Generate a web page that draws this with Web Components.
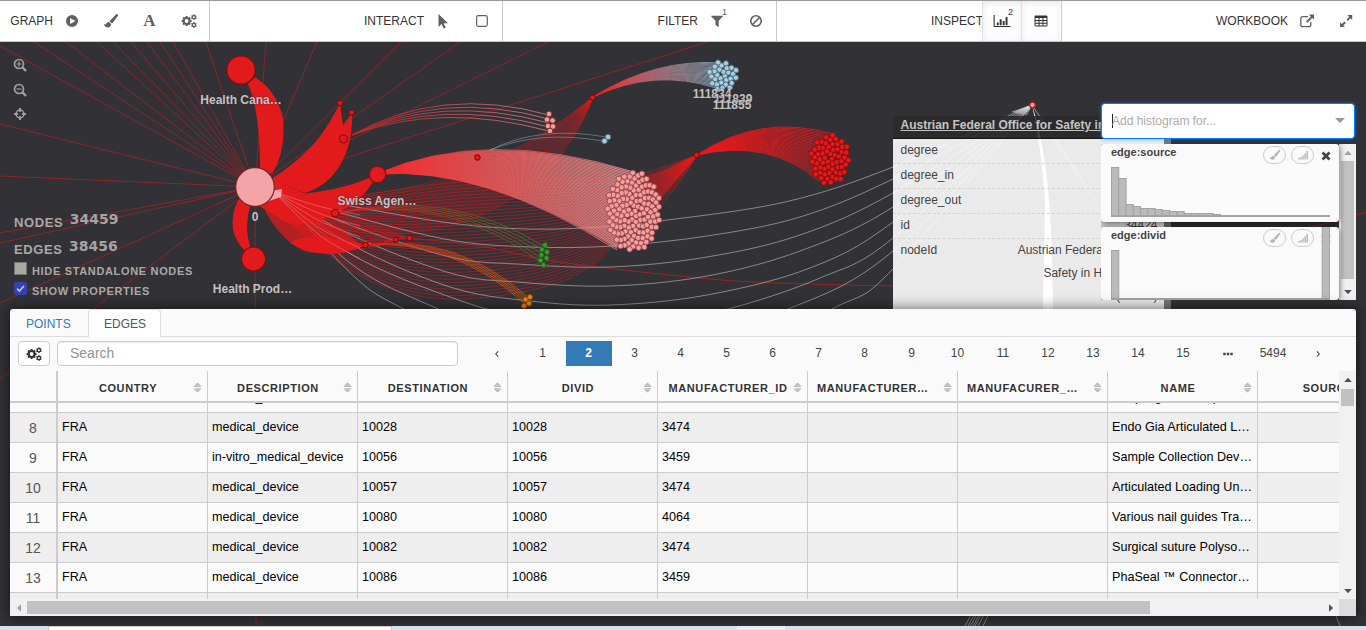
<!DOCTYPE html>
<html lang="en">
<head>
<meta charset="utf-8">
<title>Graph explorer</title>
<style>
html,body{margin:0;height:100%;overflow:hidden}
body{font:12px/1.4 "Liberation Sans",Arial,sans-serif;color:#333;background:#323136}
</style>
</head>
<body>
<graph-app></graph-app>
<script>
const define = (name, html, setup) => customElements.define(name, class extends HTMLElement {
  constructor(){ super(); this.attachShadow({mode:'open'}); }
  connectedCallback(){
    if (this.ready) return;
    this.ready = true;
    this.shadowRoot.innerHTML = typeof html === 'function' ? html(this) : html;
    if (setup) setup(this.shadowRoot, this);
  }
});

/* ---------- icons ---------- */
const gear = (cx, cy, r, hole, n, tooth) => {
  let t = '';
  for (let i = 0; i < n; i++) t += `<rect x="${cx - tooth/2}" y="${cy - r}" width="${tooth}" height="${r*.5}" transform="rotate(${i*360/n} ${cx} ${cy})"/>`;
  const mid = (r*.8 + hole)/2;
  return t + `<circle cx="${cx}" cy="${cy}" r="${mid}" fill="none" stroke="currentColor" stroke-width="${r*.8 - hole}"/>`;
};
const ICONS = {
  play: '<path fill-rule="evenodd" d="M8 2a6 6 0 1 0 0 12A6 6 0 0 0 8 2zM6.1 4.9v6.2L11.4 8z"/>',
  brush: '<path d="M14.7 1.2c.6.5.5 1.1.1 1.8L10.200 9.200c-.5.700-1 1-1.500 1.100L6.700 8.500c0-.6.3-1 .8-1.500l5.500-5.500c.6-.6 1.200-.7 1.700-.3zM6 9l2.200 2c0 2-1.400 3.400-3.700 3.400C2.300 14.400 1.200 12.900 1.100 10.800c.6.400 1.100.8 1.600.7.5-.1.4-.8.9-1.500C4.200 9.200 5 8.900 6 9z"/>',
  cogs: gear(5.6, 8, 5, 1.9, 8, 2) + gear(12.9, 4.2, 2.9, 1, 6, 1.300) + gear(12.9, 12, 2.9, 1, 6, 1.300),
  pointer: '<path d="M3.500 1v13l3.100-2.900 2 4.500 2.100-.9-2-4.400h4.300z"/>',
  square: '<rect x="2.600" y="2.600" width="10.700" height="10.700" rx="1.800" fill="none" stroke="currentColor" stroke-width="1.200"/>',
  filter: '<path d="M2.400 2.800h11.300c.3.300.2.600 0 .8L9.700 7.700v6c-.2.300-.5.300-.8.100L6.500 11.700V7.700L2.300 3.600c-.2-.3-.1-.6.100-.8z"/>',
  ban: '<circle cx="8" cy="8" r="5.200" fill="none" stroke="currentColor" stroke-width="1.600"/><path d="M4.500 11.500l7-7" stroke="currentColor" stroke-width="1.600"/>',
  chart: '<path d="M.7 2v10.900H16.500v1.100H-.4V2z M2.800 9.500h1.900v2.800H2.800zM5.700 6.300h1.900v6H5.700zM8.700 8h1.900v4.300H8.700zM11.600 4h1.900v8.300h-1.900z"/>',
  table: '<path fill-rule="evenodd" d="M2.800 2.500h10.400q1.300 0 1.300 1.300v8.400q0 1.300-1.300 1.300H2.800q-1.300 0-1.300-1.300V3.800q0-1.300 1.300-1.300zM2.500 5v1.900h3V5zm4 0v1.900h3V5zm4 0v1.900h3V5zm-8 2.900v1.800h3V7.900zm4 0v1.800h3V7.900zm4 0v1.800h3V7.900zm-8 2.800v1.800h3v-1.800zm4 0v1.800h3v-1.800zm4 0v1.800h3v-1.800z"/>',
  external: '<path d="M9 3.700H3.800q-2 0-2 2v6q0 2 2 2h6q2 0 2-2V9" fill="none" stroke="currentColor" stroke-width="1.300"/><path d="M9.800 1.500h5.200v5.200l-1.800-1.800-4.900 4.900-1.400-1.400 4.900-4.900z"/>',
  expand: '<path d="M9.300 2.100h4.900V7l-1.700-1.700-2.600 2.600-1.300-1.300 2.600-2.600zM6.600 8.600l1.300 1.300-2.600 2.600 1.700 1.600H2V9.200l1.700 1.700z"/>',
  zoomin: '<circle cx="7" cy="7" r="4.500" fill="none" stroke="currentColor" stroke-width="1.700"/><path d="M10.200 10.200l3.800 3.800" stroke="currentColor" stroke-width="2.400"/><path d="M4.600 7h4.800M7 4.600v4.800" stroke="currentColor" stroke-width="1.200"/>',
  zoomout: '<circle cx="7" cy="7" r="4.500" fill="none" stroke="currentColor" stroke-width="1.700"/><path d="M10.200 10.200l3.800 3.800" stroke="currentColor" stroke-width="2.400"/><path d="M4.600 7h4.800" stroke="currentColor" stroke-width="1.200"/>',
  crosshair: '<circle cx="8" cy="8" r="3.900" fill="none" stroke="currentColor" stroke-width="1.500"/><path d="M8 2v4M8 10v4M2 8h4M10 8h4" stroke="currentColor" stroke-width="1.900"/>',
  signal: '<path d="M1.500 12h1.900v2H1.500zM4.300 10.700h1.900V14H4.300zM7.100 8.500H9V14H7.100zM9.900 5.800h1.900V14H9.900zM12.700 2.500h1.900V14h-1.900z"/>',
  close: '<path d="M3.300 3.300l9.400 9.400M12.700 3.300l-9.400 9.400" stroke="currentColor" stroke-width="3.600"/>',
  sort: '<path d="M8-1l6.500 6h-13zM1.500 5.500h13V7h-13zM1.500 9.200h13v1.500h-13zM8 17l-6.500-5.800h13z"/>',
  left: '<path d="M9.300 5L6.600 8l2.700 3" fill="none" stroke="currentColor" stroke-width="1.200"/>',
  right: '<path d="M6.800 5l2.700 3-2.700 3" fill="none" stroke="currentColor" stroke-width="1.200"/>',
  dots: '<path d="M2.600 6.700h2.800v2.600H2.600zM6.600 6.700h2.800v2.600H6.600zM10.600 6.700h2.800v2.600h-2.800z"/>',
  check: '<path d="M3 8.200l3.400 3.500L13 4.300" fill="none" stroke="currentColor" stroke-width="2.300"/>'
};
define('ui-icon', el => `
<style>:host{display:inline-flex;width:var(--size,16px);height:var(--size,16px);flex:none}svg{width:100%;height:100%;overflow:visible;fill:currentColor}</style>
<svg viewBox="0 0 16 16">${ICONS[el.getAttribute('name')]}</svg>`);

/* ---------- top toolbar ---------- */
define('tool-button', el => `
<style>
:host{display:flex;position:relative;box-sizing:border-box;width:39px;height:40px;align-items:center;justify-content:center;color:#606060}
:host([active]){background:#fdfdfd;color:#333;box-shadow:inset 0 2px 6px rgba(0,0,0,.08);border-left:1px solid #e0e0e0}
sup{position:absolute;left:25px;top:6px;font-size:9px;line-height:10px}
</style><slot></slot>${el.hasAttribute('count') ? `<sup>${el.getAttribute('count')}</sup>` : ''}`);
define('tool-group', el => `
<style>
:host{display:flex;box-sizing:border-box;padding-right:1px;align-items:center;justify-content:flex-end;border-right:1px solid #c8c8c8;color:#333}
:host(:last-of-type){border-color:transparent;padding:0}
span{line-height:40px;margin-right:-1px}
</style><span>${el.getAttribute('label')}</span><slot></slot>`);
define('tool-bar', `
<style>
:host{display:grid;grid-template-columns:210px 293px 274px 285px 1fr;box-sizing:border-box;height:42px;background:#fff;border-top:1px solid #999;border-bottom:1px solid #c8c8c8}
.letter{font:bold 17px/20px "Liberation Serif",serif}
</style>
<tool-group label="GRAPH"><tool-button><ui-icon name="play"></ui-icon></tool-button><tool-button><ui-icon name="brush"></ui-icon></tool-button><tool-button><span class="letter">A</span></tool-button><tool-button><ui-icon name="cogs"></ui-icon></tool-button></tool-group>
<tool-group label="INTERACT"><tool-button><ui-icon name="pointer"></ui-icon></tool-button><tool-button><ui-icon name="square"></ui-icon></tool-button></tool-group>
<tool-group label="FILTER"><tool-button count="1"><ui-icon name="filter"></ui-icon></tool-button><tool-button><ui-icon name="ban"></ui-icon></tool-button></tool-group>
<tool-group label="INSPECT"><tool-button active count="2"><ui-icon name="chart"></ui-icon></tool-button><tool-button active><ui-icon name="table"></ui-icon></tool-button></tool-group>
<tool-group label="WORKBOOK"><tool-button><ui-icon name="external"></ui-icon></tool-button><tool-button><ui-icon name="expand"></ui-icon></tool-button></tool-group>`);

/* ---------- network drawing ---------- */
const RED = '#e31a1c', PINK = '#fb9a99', BLUE = '#a6cee3', GREEN = '#33a02c', ORANGE = '#ff7f00';
function spline(p){
  let d = `M${p[0]}`;
  for (let i = 0; i < p.length - 1; i++){
    const a = p[i-1] || p[i], b = p[i], c = p[i+1], e = p[i+2] || c;
    d += `C${b[0]+(c[0]-a[0])/6} ${b[1]+(c[1]-a[1])/6} ${c[0]-(e[0]-b[0])/6} ${c[1]-(e[1]-b[1])/6} ${c[0]} ${c[1]}`;
  }
  return d;
}
const line = (d, stroke, op = 1, w = 1) => `<path d="${d}" fill="none" stroke="${stroke}" stroke-opacity="${op}" stroke-width="${w}"/>`;
const node = (x, y, r, fill, stroke, sw = 1) => `<circle cx="${x}" cy="${y}" r="${r}" fill="${fill}" stroke="${stroke}" stroke-width="${sw}"/>`;
function cluster(cx, cy, rx, ry, n, r, fill, stroke){
  let s = '';
  for (let i = 0; i < n; i++){
    const q = Math.sqrt((i + .5)/n), a = i * 2.39996;
    s += node((cx + rx*q*Math.cos(a)).toFixed(1), (cy + ry*q*Math.sin(a)).toFixed(1), r, fill, stroke, .8);
  }
  return s;
}
function fan(x, y, c1, e1, c2, e2, n, stroke, op, w){
  let s = '';
  const mix = (a, b, t) => (a + (b - a)*t).toFixed(1);
  for (let i = 0; i < n; i++){
    const t = i/(n - 1);
    s += `M${x} ${y}Q${mix(c1[0],c2[0],t)} ${mix(c1[1],c2[1],t)} ${mix(e1[0],e2[0],t)} ${mix(e1[1],e2[1],t)}`;
  }
  return line(s, stroke, op, w);
}
function drawGraph(){
  let s = '';
  const rays = [[0,46],[34,42],[66,42],[97,42],[113,42],[131,42],[147,42],[160,42],[173,42],[206,42],[266,42],[317,42],[401,42],[460,42],[548,42],[707,42],[0,124],[0,176],[0,233],[0,243],[0,303],[0,379],[256,626]];
  s += line(rays.map(p => `M255 187L${p[0]} ${p[1]}`).join(''), '#d81c20', .6, .9);
  let a = '';
  for (let i = 0; i < 36; i++){
    const t = i/35;
    a += spline([[262,195],[310,200+40*t],[375,193+90*t],[460,182+117*t],[570,178+100*t],[640,178+42*t],[697,155]]);
  }
  s += line(a, RED, .52, .9);
  s += fan(697,155,[668,166],[636,176],[680,185],[655,212],16,RED,.55,.8);
  a = '';
  for (let i = 0; i < 24; i++){ const t = i/23; a += `M265 200C${370+10*t} ${200+70*t} ${480+65*t} ${190+40*t} 593 97`; }
  s += line(a, RED, .5, .8);
  s += line(spline([[409,238],[480,246],[560,262],[690,277],[780,283],[960,285],[1130,268],[1307,228],[1366,212]]), RED, .65, .9);
  /* long pale edges converging on the agency node */
  const tails = [
    [[450,223],[527,229],[600,227],[660,221],[785,202],[893,167]],
    [[450,240],[530,247],[613,246],[707,236],[800,217],[893,179]],
    [[450,257],[517,264],[610,267],[707,257],[800,235],[893,193]],
    [[450,273],[517,282],[610,286],[707,276],[800,251],[893,207]],
    [[450,287],[530,301],[610,305],[707,295],[810,268],[893,222]],
    [[450,297],[530,318],[640,325],[728,309],[820,278],[893,238]],
    [[420,301],[520,336],[660,345],[788,309],[893,251]],
    [[400,307],[520,360],[700,370],[832,309],[893,269]]];
  a = '';
  tails.forEach((t, i) => a += spline([[278,193],[350,206+i*9.500],...t,[1032,105]]));
  s += line(a, '#c8c8c8', .68, .85);
  a = '';
  for (let i = 0; i < 12; i++) a += `M1032 105L${1012+i*1.3} ${112+i*.3}`;
  s += line(a, '#ddd', .7, .8);
  s += line('M1032 105L1101 211L1160 309M1032 105L1090 190', '#fff', .35, .8);
  s += '<path d="M1032 105Q1041 145 1045 200L1043 309H1053L1051 230Q1047 150 1032 105z" fill="#fff"/>';
  s += line('M965 626L990 580M968 626L993 580M970.500 626L995.500 580M973 626L998 580M975 626L1000 580M978 626L1003 580M983 626L1005 580M1340 626L1330 600', '#aaa', .7, .9);
  /* solid petals around the hub */
  s += `<g fill="${RED}">
  <path d="M248 84Q260 112 260 168L272 174Q286 152 283 118Q276 90 255 77z"/>
  <path d="M270 180Q301 160 318 139Q332 120 340 103L343 126L352 112Q353 135 346 153Q334 184 305 193z"/>
  <path d="M268 178L305 193.500Q345 189 371 177L373 182Q360 203 333 215Q308 229 285 222L258 205z"/>
  <path d="M239 199Q231 212 233 229Q236 244 247 252L250 246Q244 227 250 206z"/>
  <path d="M290 243Q325 264 366 245Q345 240 318 236Q300 236 290 243z"/>
  <path d="M262 204Q276 236 302 250Q315 256 340 250L362 246L340 228L312 218z" fill-opacity=".72"/></g>`;
  s += fan(270,205,[330,270],[396,239],[350,215],[409,238],12,RED,.6,.8);
  a = '';
  for (let i = 0; i < 5; i++) a += spline([[278,193+i*.8],[318,206+i*7],[360,215+i*11]]);
  s += line(a, '#e8a5a5', .6, .7);
  /* fans */
  s += '<path d="M377 174Q485 129 634 172L617 248Q485 168 377 174z" fill="url(#toPink)" fill-opacity=".4"/>';
  s += fan(377,174,[485,126],[634,172],[485,166],[617,250],50,'url(#toPink)',.75,.9);
  s += fan(697,155,[760,113],[833,134],[770,138],[820,182],28,RED,.85,1);
  s += fan(593,97,[655,58],[722,63],[655,68],[716,88],20,'url(#toBlue)',.8,.8);
  s += fan(352,135,[440,85],[549,115],[440,102],[549,131],5,'url(#toPink2)',.8,.8);
  s += fan(490,150,[540,125],[606,137],[540,130],[603,141],2,BLUE,.5,.8);
  s += fan(335,213,[450,187],[545,247],[450,195],[541,262],5,'url(#toGreen)',.7,.8);
  s += fan(365,245,[455,232],[529,298],[455,240],[525,304],5,'url(#toOrange)',.75,.8);
  /* nodes */
  s += cluster(633.500,211,27,40,138,2.75,PINK,'#84464b');
  s += cluster(830,159,19.500,25,62,2.7,RED,'#88090c');
  s += cluster(723,76,15,14.500,29,2.6,BLUE,'#526876');
  for (const p of [[549,114],[547,119.500],[552.500,120.500],[548,126],[553,126.500],[550,131]]) s += node(...p,2.8,PINK,'#70383b');
  for (const p of [[608,137],[604.500,141]]) s += node(...p,2.8,BLUE,'#526876');
  for (const p of [[545,245],[542,249.500],[547,252],[541.500,255],[546.500,258],[540.500,260.500],[543.500,265]]) s += node(...p,2.5,GREEN,'#1e5e1a',.8);
  for (const p of [[530,297],[525.500,299.500],[529,303.500],[524,306]]) s += node(...p,2.5,ORANGE,'#8b4a08',.8);
  for (const p of [[340,103,2.6],[351.500,112.500,2.6],[343.500,139,4],[335,213,3.6],[365.500,245,2.6],[396,239.500,2.3],[409.500,238,2.6],[477.500,157.500,2.6],[592.500,97.500,2.6],[696.500,155,2.6]]) s += node(p[0],p[1],p[2],RED,'#8b0a0d',1.1);
  s += '<path d="M266 202L281 197L282 189L270 191z" fill="#f4a3a6"/>';
  s += node(255,187,19.300,'#f4a3a6','#74242a',1.2) + node(241,70,14.200,RED,'#7f1015',1.2) + node(253.500,259,12,RED,'#7f1015',1.2) + node(377.500,174.500,8.300,RED,'#7f1015',1.2) + node(1032.500,105,2.8,PINK,'#a31c22',1.3);
  const label = (x, y, t) => `<text x="${x}" y="${y}">${t}</text>`;
  s += '<g class="labels">' + label(241,104,'Health Cana…') + label(377,205,'Swiss Agen…') + label(252.5,293,'Health Prod…') + label(255,221,'0') + label(712,98,'111834') + label(733,103,'111839') + label(732,109,'111855') + '</g>';
  return s;
}
const grad = (id, x1, x2, c1, c2) => `<linearGradient id="${id}" gradientUnits="userSpaceOnUse" x1="${x1}" x2="${x2}" y1="0" y2="0"><stop offset="0" stop-color="${c1}"/><stop offset="1" stop-color="${c2}"/></linearGradient>`;
define('graph-canvas', () => `
<style>
:host{display:block}
svg{display:block;width:1366px;height:584px;background:#323136}
.labels{font:bold 12px "Liberation Sans",sans-serif;fill:#d2d0d1;fill-opacity:.93;text-anchor:middle;text-shadow:0 0 2px rgba(50,49,54,.9)}
</style>
<svg viewBox="0 42 1366 584"><defs>${grad('toPink',377,620,'#ef2325',PINK)}${grad('toBlue',593,715,RED,BLUE)}${grad('toPink2',343,549,RED,PINK)}${grad('toGreen',335,545,RED,GREEN)}${grad('toOrange',365,530,RED,ORANGE)}</defs>${drawGraph()}</svg>`);

/* ---------- overlays at the left ---------- */
define('zoom-controls', `
<style>:host{display:flex;flex-direction:column;gap:8.500px;color:#a09fa0}</style>
<ui-icon name="zoomin"></ui-icon><ui-icon name="zoomout"></ui-icon><ui-icon name="crosshair"></ui-icon>`);
define('graph-stats', `
<style>
:host{display:block;color:#aaa9a5;font-weight:bold}
.count{display:flex;align-items:flex-end;height:27px;font-size:13px;line-height:20px;letter-spacing:.6px}
.count b{font:bold 14px/20px "DejaVu Sans",sans-serif;letter-spacing:0;margin:0 0 4px 6.500px;color:#a4a3a5}
label{display:flex;align-items:center;height:20px;font-size:11px;letter-spacing:.66px;white-space:nowrap}
label span{margin-top:3px}
i{display:flex;width:11px;height:11px;margin:-3px 5px 0 0;background:#a9a8a3;border:1px solid #77766f}
i.on{background:#3442b4;border-color:#3442b4;border-radius:2px;color:#c5c8da;--size:11px}
</style>
<div class="count"><span>NODES</span><b>34459</b></div>
<div class="count"><span>EDGES</span><b>38456</b></div>
<label><i></i><span>HIDE STANDALONE NODES</span></label>
<label><i class="on"><ui-icon name="check"></ui-icon></i><span>SHOW PROPERTIES</span></label>`);

/* ---------- selected node properties ---------- */
define('property-panel', `
<style>
:host{display:block;width:278px;height:193px;overflow:hidden;color:#444}
header{box-sizing:border-box;height:23px;padding-left:7.500px;background:rgba(42,42,42,.88);border-bottom:1px solid #111;border-radius:3px 3px 0 0;color:#c4c4c4;font-weight:bold;line-height:18px;text-decoration:underline;white-space:nowrap;overflow:hidden}
.body{display:flex;height:170px;background:rgba(255,255,255,.9)}
dl{margin:0;flex:1}
.row{display:flex;justify-content:space-between;padding:0 6.500px 0 7.500px;line-height:23px;min-height:24px;border-bottom:1px dashed #d4d4d4}
.row:last-child{border:0}
dd{margin:0;text-align:right;max-width:150px}
.track{width:7px;background:#777}
</style>
<header>Austrian Federal Office for Safety in Health Care</header>
<div class="body"><dl>
<div class="row"><dt>degree</dt><dd></dd></div><div class="row"><dt>degree_in</dt><dd></dd></div><div class="row"><dt>degree_out</dt><dd></dd></div>
<div class="row"><dt>id</dt><dd>34424</dd></div><div class="row"><dt>nodeId</dt><dd>Austrian Federal Office for<br>Safety in Health Care<br>(BASG)</dd></div>
</dl><div class="track"></div></div>`);

/* ---------- histograms ---------- */
define('scroll-arrow', el => `
<style>:host{display:flex;width:17px;height:17px;align-items:center;justify-content:center;color:#505050}:host([dim]){color:#a3a3a3}svg{width:8px;height:8px;fill:currentColor;transform:rotate(${{up:0,right:90,down:180,left:270}[el.getAttribute('dir')]}deg)}</style>
<svg viewBox="0 0 8 8"><path d="M.2 6L4 1.800l3.800 4.200z"/></svg>`);
define('histogram-card', el => {
  const v = JSON.parse(el.getAttribute('bars')), h = +el.getAttribute('plot'), w = 218/v.length;
  return `
<style>
:host{display:block;position:relative;box-sizing:border-box;width:238px;background:#fafafa;border-radius:3px;box-shadow:0 1px 6px rgba(0,0,0,.7);color:#444}
header{display:flex;height:22px;padding-left:10px;align-items:center;gap:6px}
b{flex:1;font-size:11px;line-height:12px;margin-top:-6px}
.pill{display:flex;box-sizing:border-box;width:23px;height:18px;border:1px solid #ccc;border-radius:9px;align-items:center;justify-content:center;color:#b5b5b5;--size:12px}
.pill+.pill{margin-left:-1px}
.x{--size:12px;margin:2px 7px 0 0;display:flex}
svg{position:absolute;left:10px;bottom:${el.getAttribute('foot')}px;width:219px;height:${h}px;overflow:visible}
rect{fill:#bababa;stroke:#a3a3a3;stroke-width:1}
</style>
<header><b>${el.getAttribute('label')}</b><span class="pill"><ui-icon name="brush"></ui-icon></span><span class="pill"><ui-icon name="signal"></ui-icon></span><span class="x"><ui-icon name="close"></ui-icon></span></header>
<svg>${v.map((y,i) => y ? `<rect x="${(i*w+.5).toFixed(1)}" y="${h-y+.5}" width="${w.toFixed(1)}" height="${y-1}"/>` : '').join('')}<rect x=".5" y="${h-1.500}" width="218" height="1"/></svg>`;
});
define('histogram-panel', `
<style>
:host{display:block;width:255px}
.select{display:flex;box-sizing:border-box;height:36px;width:254px;padding:0 9px 0 10px;background:#fff;border:1px solid #007eff;border-radius:4px;align-items:center;color:#aaa;box-shadow:0 0 4px rgba(0,126,255,.5)}
.caret{width:1px;height:14px;margin-right:-1px;background:#222}
.select span{flex:1}
.tri{border:5px solid transparent;border-top-color:#999;border-bottom:0;margin-top:-2px}
.scroll{display:flex;height:156px;margin-top:5px;overflow:hidden}
.cards{display:flex;flex:1;flex-direction:column;gap:5px}
.bar{display:flex;flex-direction:column;justify-content:space-between;width:17px;background:#f1f1f1}
.thumb{width:13px;height:118px;margin:0 auto 4px;background:#c1c1c1}
.one{height:78px}.two{height:73px;overflow:hidden}
</style>
<div class="select"><i class="caret"></i><span>Add histogram for...</span><i class="tri"></i></div>
<div class="scroll"><div class="cards">
<histogram-card class="one" label="edge:source" plot="50" foot="5" bars="[50,39,13,11,9,9,8,7,6,6,4,4,4,4,3,2,2,2,2,2,2,2,2,2,2,2,2,2,2,2]"></histogram-card>
<histogram-card class="two" label="edge:divid" plot="50" foot="0" bars="[50,2,2,2,2,2,2,2,2,2,2,2,2,2,2,2,2,2,2,2,2,2,2,2,2,2,2,2,2,74]"></histogram-card>
</div><div class="bar"><scroll-arrow dir="up" dim></scroll-arrow><div class="thumb"></div><scroll-arrow dir="down"></scroll-arrow></div></div>`);

/* ---------- data table ---------- */
define('page-nav', () => {
  const items = ['<ui-icon name="left"></ui-icon>',1,2,3,4,5,6,7,8,9,10,11,12,13,14,15,'<ui-icon name="dots"></ui-icon>',5494,'<ui-icon name="right"></ui-icon>'];
  return `
<style>:host{display:flex;color:#444}span{display:flex;box-sizing:border-box;width:46px;height:25px;padding-right:1px;align-items:center;justify-content:center}
span:nth-child(n+13){width:45px}span:nth-child(n+11){padding:0 0 0 1px}.on{background:#337ab7;color:#fff;font-weight:bold}ui-icon{--size:14px}</style>
${items.map(i => `<span${i === 2 ? ' class="on"' : ''}>${i}</span>`).join('')}`;
});
define('data-table', () => {
  const cols = ['COUNTRY','DESCRIPTION','DESTINATION','DIVID','MANUFACTURER_ID','MANUFACTURER…','MANUFACURER_…','NAME','SOURCE'];
  const rows = [
    [7,'medical_device','10026','3474','Coupling for Clamps…'],
    [8,'medical_device','10028','3474','Endo Gia Articulated L…'],
    [9,'in-vitro_medical_device','10056','3459','Sample Collection Dev…'],
    [10,'medical_device','10057','3474','Articulated Loading Un…'],
    [11,'medical_device','10080','4064','Various nail guides Tra…'],
    [12,'medical_device','10082','3474','Surgical suture Polyso…'],
    [13,'medical_device','10086','3459','PhaSeal ™ Connector…'],
    [14,'medical_device','10090','3459','Connector']];
  return `
<style>
:host{display:grid;grid-template:228px 17px/1fr 17px}
.view{overflow:hidden}
.tr{display:grid;grid-template-columns:48px repeat(9,150px);box-sizing:border-box;height:30px;border-bottom:1px solid #ccc;background:#fafafa;font-size:12.600px;line-height:29px;color:#000}
.tr.odd{background:#eee}
.tr>*{box-sizing:border-box;border-right:1px solid #ccc;padding:0 0 0 4px;overflow:hidden;white-space:nowrap}
.tr>:first-child{border-right:2px solid #ccc;padding:0;text-align:center;font-size:14px;line-height:30px;color:#555}
.head{height:32px;border-bottom:2px solid #ccc;font-size:11px;line-height:33px;font-weight:bold;letter-spacing:.6px;color:#333}
.head>*{display:flex;padding:2px 5px 0 5px;align-items:center}
.head>.cut{padding-left:9px}
.cut span{text-align:left}
.head>:first-child{padding:0}
.head span{flex:1;margin-top:2px;text-align:center;white-space:nowrap}
.head .cut span{text-align:left}
.head ui-icon{--size:9px;color:#b9b9b9}
.rows{height:196px;overflow:hidden}
.rows .tr:first-child{margin-top:-20px}
.v{display:flex;flex-direction:column;background:#f1f1f1}
.v i{width:13px;height:17px;margin:1px auto auto;background:#c1c1c1}
.h{display:flex;background:#f1f1f1}
.h i{width:1123px;height:13px;margin:2px auto 0 0;background:#c1c1c1}
.corner{background:#dcdcdc}
</style>
<div class="view"><div class="tr head"><div></div>${cols.map(c => `<div${c.endsWith('…') ? ' class="cut"' : ''}><span>${c}</span><ui-icon name="sort"></ui-icon></div>`).join('')}</div>
<div class="rows">${rows.map((r,i) => `<div class="tr${i % 2 ? ' odd' : ''}"><div>${r[0]}</div><div>FRA</div><div>${r[1]}</div><div>${r[2]}</div><div>${r[2]}</div><div>${r[3]}</div><div></div><div></div><div>${r[4]}</div><div></div></div>`).join('')}</div></div>
<div class="v"><scroll-arrow dir="up"></scroll-arrow><i></i><scroll-arrow dir="down"></scroll-arrow></div>
<div class="h"><scroll-arrow dir="left" dim></scroll-arrow><i></i><scroll-arrow dir="right"></scroll-arrow></div><div class="corner"></div>`;
});
define('data-panel', `
<style>
:host{display:flex;flex-direction:column;width:1346px;height:307px;background:#fafafa;border-radius:3px 3px 0 0;box-shadow:0 0 14px rgba(0,0,0,.6);overflow:hidden}
nav{display:flex;box-sizing:border-box;height:28px;border-bottom:1px solid #ddd;line-height:30px}
nav span{box-sizing:border-box;width:78px;padding-left:16px;color:#337ab7}
nav .on{width:73px;height:28px;padding-left:15px;background:#fff;border:1px solid #ddd;border-bottom:0;border-radius:4px 4px 0 0;color:#555;line-height:29px}
.tools{display:flex;height:25px;padding:4px 0 5px 8px}
button{display:flex;box-sizing:border-box;width:32px;height:25px;margin:0 7px 0 0;padding:1px 0 0;align-items:center;justify-content:center;background:#fff;border:1px solid #ccc;border-radius:4px;color:#333}
.search{box-sizing:border-box;width:401px;margin-right:16px;padding-left:12px;border:1px solid #ccc;border-radius:4px;background:#fff;box-shadow:inset 0 1px 1px rgba(0,0,0,.08);font-size:14px;line-height:23px;color:#929292}
</style>
<nav><span>POINTS</span><span class="on">EDGES</span></nav>
<div class="tools"><button><ui-icon name="cogs"></ui-icon></button><div class="search">Search</div><page-nav></page-nav></div>
<data-table></data-table>`);

define('graph-app', `
<style>
:host{display:grid;grid-template-rows:42px 584px 4px;width:1366px;height:630px;overflow:hidden}
.stage{position:relative;overflow:hidden}
.stage>:not(graph-canvas){position:absolute}
zoom-controls{left:12px;top:15px}
graph-stats{left:14px;top:164px}
property-panel{left:893px;top:74px}
histogram-panel{left:1101px;top:61px}
data-panel{left:10px;top:267px}
footer{display:grid;grid-template-columns:48px 344px 345px 48px 1fr 5px;background:#d5e0ee}
footer i{background:#cfe4ec}
footer i:nth-child(2){background:#fff;border:1px solid #ccc;border-bottom:0}
footer i:nth-child(4){background:#e6eef5}
footer i:nth-child(n+5){background:#d5dfee}
</style>
<tool-bar></tool-bar>
<div class="stage"><graph-canvas></graph-canvas><zoom-controls></zoom-controls><graph-stats></graph-stats><property-panel></property-panel><histogram-panel></histogram-panel><data-panel></data-panel></div>
<footer><i></i><i></i><i></i><i></i><i></i><i></i></footer>`);
</script>
</body>
</html>
